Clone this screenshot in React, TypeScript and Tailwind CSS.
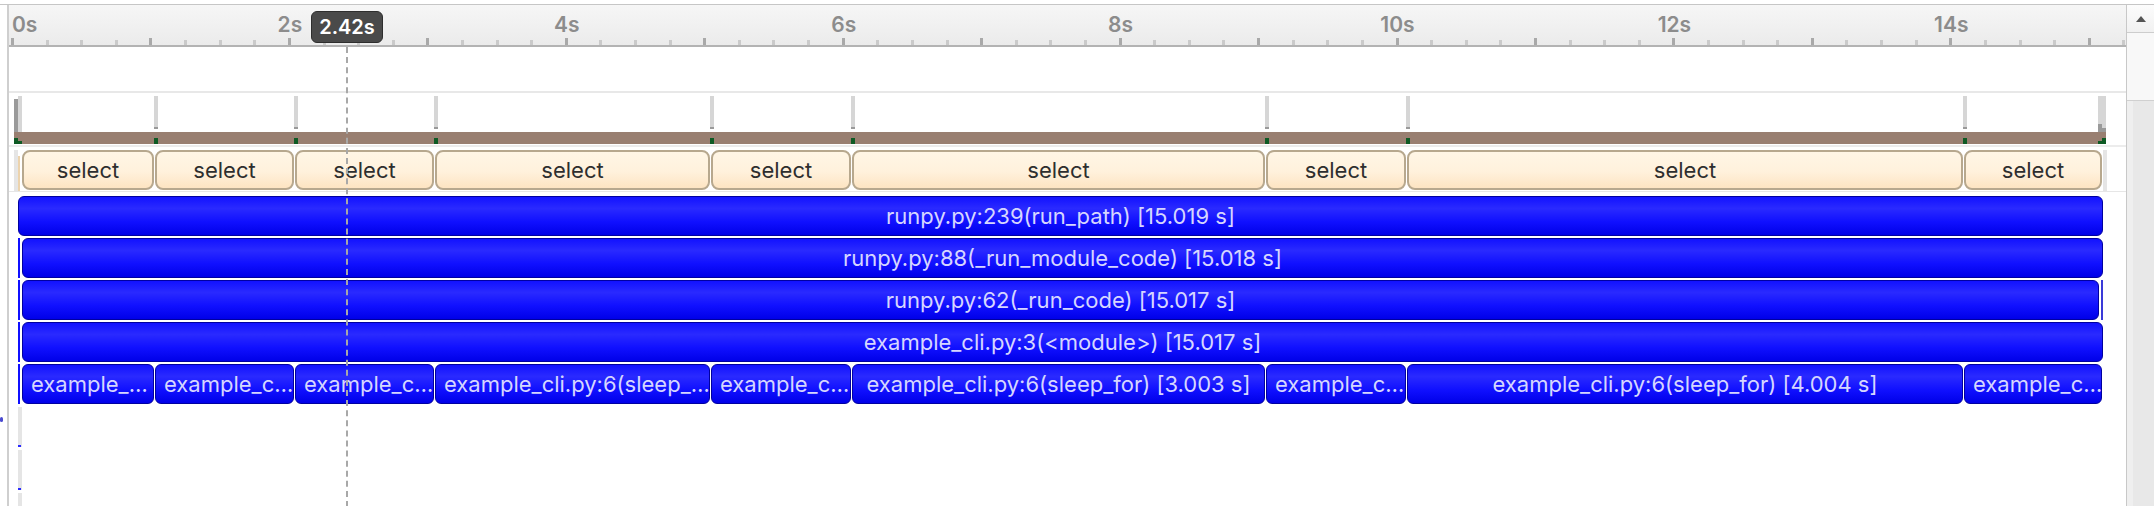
import React from "react";

const PX_PER_S = 138.45;
const RULER_X0 = 3; // 0s tick, relative to the content column (page x = 9)

// page-x boundaries of the sleep_for calls
const bounds = [22, 155, 295, 435, 711, 852, 1266, 1407, 1964, 2103];

const leaves = [
  "example_…",
  "example_c…",
  "example_c…",
  "example_cli.py:6(sleep_…",
  "example_c…",
  "example_cli.py:6(sleep_for) [3.003 s]",
  "example_c…",
  "example_cli.py:6(sleep_for) [4.004 s]",
  "example_c…",
];

const stack = [
  { label: "runpy.py:239(run_path) [15.019 s]", left: 18, right: 2102, strip: false, rightStrip: false },
  { label: "runpy.py:88(_run_module_code) [15.018 s]", left: 22, right: 2102, strip: true, rightStrip: false },
  { label: "runpy.py:62(_run_code) [15.017 s]", left: 22, right: 2098, strip: true, rightStrip: true },
  { label: "example_cli.py:3(<module>) [15.017 s]", left: 22, right: 2102, strip: true, rightStrip: false },
];

const blueBox =
  "flex h-[40px] items-center overflow-hidden whitespace-nowrap rounded-[6px] border border-[#0000a0] bg-[linear-gradient(to_bottom,#1212ff_0%,#2a2aff_30%,#1010ff_65%,#0000e8_100%)] text-[22px] text-[#d6d6ff]";

function Ruler() {
  const ticks = [];
  for (let i = 0; i <= 61; i++) {
    const t = i / 4;
    const x = RULER_X0 + t * PX_PER_S;
    const major = i % 4 === 0;
    ticks.push(
      <rect
        key={i}
        x={Math.round(x) - 1}
        y={major ? 33 : 35}
        width={3}
        height={major ? 7 : 5}
        fill={major ? "#a9a9a9" : "#cacaca"}
      />
    );
  }
  const labels = [0, 2, 4, 6, 8, 10, 12, 14];
  return (
    <div className="relative h-[42px] shrink-0 border-b-2 border-[#b3b3b3] bg-[linear-gradient(to_bottom,#f6f6f6,#ebebeb)]">
      <svg className="absolute left-0 top-0" width={2117} height={40}>
        {ticks}
      </svg>
      {labels.map((s) => {
        const x = RULER_X0 + s * PX_PER_S;
        return (
          <span
            key={s}
            className={
              s === 0
                ? "absolute top-[7px] text-[21px] font-semibold leading-[26px] text-[#8c8c8c]"
                : "absolute top-[7px] -translate-x-1/2 text-[21px] font-semibold leading-[26px] text-[#8c8c8c]"
            }
            style={{ left: s === 0 ? x : x + 1 }}
          >
            {s}s
          </span>
        );
      })}
    </div>
  );
}

function Track() {
  const inner = bounds.slice(1, -1);
  return (
    <div className="relative h-[52px] shrink-0">
      {/* first marker */}
      <div className="absolute left-[5px] top-[6px] h-[33px] w-[4px] bg-[#9a9a9a]" />
      <div className="absolute left-[9px] top-[3px] h-[36px] w-[4px] bg-[#d6d6d6]" />
      {inner.map((b) => (
        <div key={b} className="absolute top-[3px] flex w-[4px] flex-col" style={{ left: b - 1 - 9 }}>
          <div className="h-[31px] bg-[#d6d6d6]" />
          <div className="h-[2px] bg-[#9a9a9a]" />
        </div>
      ))}
      {/* last marker */}
      <div className="absolute left-[2089px] top-[3px] h-[36px] w-[8px] bg-[#d6d6d6]" />
      <div className="absolute left-[2089px] top-[31px] h-[8px] w-[4px] bg-[#9a9a9a]" />
      <div className="absolute left-[2093px] top-[35px] h-[4px] w-[4px] bg-[#9a9a9a]" />
      {/* brown band */}
      <div className="absolute left-[5px] top-[39px] h-[12px] w-[2092px] bg-[#997f71]" />
      <div className="absolute left-[5px] top-[45px] h-[6px] w-[4px] bg-[#0d5a24]" />
      <div className="absolute left-[9px] top-[48px] h-[3px] w-[4px] bg-[#0d5a24]" />
      {inner.map((b) => (
        <div key={"g" + b} className="absolute top-[45px] h-[6px] w-[4px] bg-[#0d5a24]" style={{ left: b - 1 - 9 }} />
      ))}
      <div className="absolute left-[2089px] top-[48px] h-[3px] w-[4px] bg-[#0d5a24]" />
      <div className="absolute left-[2093px] top-[45px] h-[6px] w-[4px] bg-[#0d5a24]" />
    </div>
  );
}

function SelectRow() {
  return (
    <div className="flex h-[45px] shrink-0 items-start border-b border-[#e6e6e6] pl-[5px] pt-[3px]">
      <div className="h-[41px] w-[4px] bg-[#e5e5e5]" />
      <div className="mt-[6px] h-[35px] w-[2px] bg-[#ecd3ad]" />
      <div className="flex pl-[2px]">
        {leaves.map((_, i) => (
          <div
            key={i}
            className="mr-px flex h-[40px] items-center justify-center rounded-[8px] border-2 border-[#b7a88e] bg-[linear-gradient(to_bottom,#fff6e6,#fff1dc_55%,#fde4c2)] text-[22px] text-[#2e2e2e]"
            style={{ width: bounds[i + 1] - bounds[i] - 1 }}
          >
            select
          </div>
        ))}
      </div>
      <div className="h-[41px] w-[4px] bg-[#e5e5e5]" />
    </div>
  );
}

function StackRows() {
  return (
    <div className="flex flex-col gap-[2px] pt-[4px]">
      {stack.map((r) => (
        <div key={r.label} className="flex items-stretch" style={{ paddingLeft: r.left - 9 - (r.strip ? 4 : 0) }}>
          {r.strip && <div className="mr-[2px] w-[2px] bg-[#1010ff]" />}
          <div className={blueBox + " justify-center"} style={{ width: r.right - r.left + 1 }}>
            {r.label}
          </div>
          {r.rightStrip && <div className="ml-[2px] w-[2px] bg-[#3a3ad8]" />}
        </div>
      ))}
      <div className="flex items-stretch pl-[9px]">
        <div className="mr-[2px] w-[2px] bg-[#1010ff]" />
        <div className="flex">
          {leaves.map((l, i) => {
            const w = bounds[i + 1] - bounds[i] - 1;
            const wide = w > 300;
            return (
              <div
                key={i}
                className={blueBox + (wide ? " justify-center px-1" : " justify-start px-[8px]") + " mr-px"}
                style={{ width: w }}
              >
                {l}
              </div>
            );
          })}
        </div>
      </div>
      <div className="flex flex-col gap-[3px] pl-[9px] pt-[1px]">
        <div className="relative h-[40px] w-[4px] bg-[#e5e5e5]">
          <div className="absolute bottom-0 left-0 h-[2px] w-[3px] bg-[#2a2aff]" />
        </div>
        <div className="relative h-[40px] w-[4px] bg-[#e5e5e5]">
          <div className="absolute bottom-0 left-0 h-[2px] w-[3px] bg-[#2a2aff]" />
        </div>
        <div className="h-[40px] w-[4px] bg-[#e5e5e5]" />
      </div>
    </div>
  );
}

function Scrollbar() {
  return (
    <div className="flex w-[28px] shrink-0 flex-col border-l border-[#c8c8c8] bg-[#e8e8e8]">
      <div className="flex h-[28px] items-center justify-center border-b border-[#cdcdcd] bg-[linear-gradient(to_bottom,#fcfcfc,#f1f1f1)]">
        <svg width="12" height="8" viewBox="0 0 12 8">
          <path d="M6 1 L11 7 L1 7 Z" fill="#555" />
        </svg>
      </div>
      <div className="h-[68px] border-b border-[#d0d0d0] bg-[#f8f8f8]" />
      <div className="flex-1 border-l-[6px] border-[#efefef]" />
    </div>
  );
}

export default function App() {
  return (
    <div
      className="relative flex h-[506px] w-[2154px] flex-col overflow-hidden bg-white pt-[4px]"
      style={{ fontFamily: "Inter, 'Liberation Sans', sans-serif" }}
    >
      <div className="flex flex-1 border-t border-[#c6c6c6]">
        <div className="relative w-[7px] shrink-0">
          <div className="absolute left-0 top-[412px] h-[5px] w-[3px] rounded-full bg-[#4a4ad0]" />
        </div>
        <div className="flex min-w-0 flex-1 border-l-2 border-[#cfcfcf]">
          <div className="flex min-w-0 flex-1 flex-col">
            <Ruler />
            <div className="h-[46px] shrink-0 border-b-2 border-[#e8e8e8]" />
            <Track />
            <div className="h-[2px] shrink-0 bg-[#ececec]" />
            <SelectRow />
            <StackRows />
          </div>
        </div>
        <Scrollbar />
      </div>

      {/* playhead */}
      <div className="absolute left-[346px] top-[47px] h-[460px] border-l-2 border-dashed border-[#a8a8a8]" />
      <div className="absolute left-[311px] top-[11px] flex h-[32px] w-[72px] items-center justify-center rounded-[6px] border border-[#2e2e2e] bg-[#4a4a4a] text-[20px] font-semibold text-white">
        2.42s
      </div>
    </div>
  );
}
